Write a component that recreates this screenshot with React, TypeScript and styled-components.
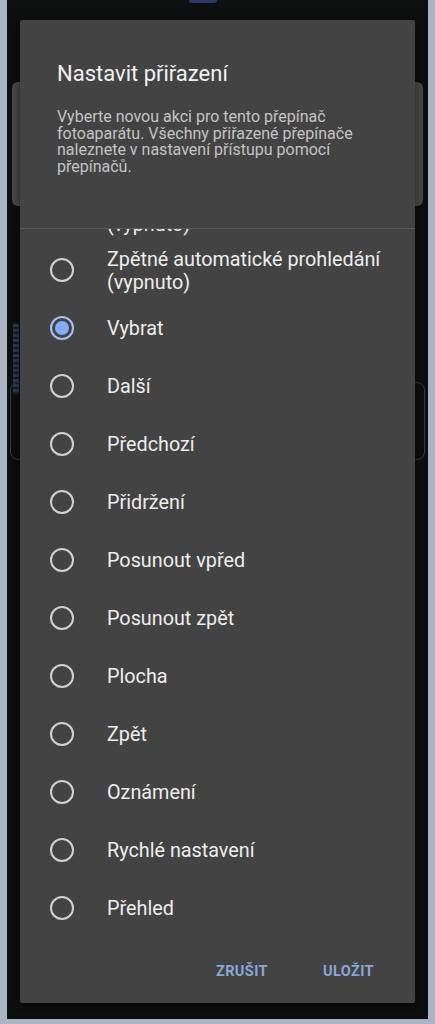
import { useLayoutEffect, useRef } from "react";
import styled, { createGlobalStyle } from "styled-components";

const GlobalStyle = createGlobalStyle`
  html, body {
    margin: 0;
    padding: 0;
    background: #0f1010;
  }
  * {
    box-sizing: border-box;
  }
`;

const Screen = styled.div`
  position: relative;
  width: 435px;
  height: 1024px;
  overflow: hidden;
  background: #0e0f0f;
  border-left: 7px solid #a9b4c4;
  border-right: 7px solid #a9b4c4;
  border-bottom: 5px solid #a9b4c4;
  font-family: Roboto, "Noto Sans", sans-serif;
  display: flex;
  flex-direction: column;
  align-items: center;
`;

const Notch = styled.div`
  width: 28px;
  height: 3px;
  border-radius: 0 0 3px 3px;
  background: #2c3a66;
  margin-left: -30px;
`;

const BgCard = styled.div`
  align-self: stretch;
  margin: 79px 5px 0;
  height: 124px;
  border-radius: 6px;
  background: #4d4e49;
`;

const BgDots = styled.div`
  align-self: flex-start;
  margin: 118px 0 0 6px;
  width: 6px;
  height: 70px;
  background: repeating-linear-gradient(#27425e 0 3px, #14202c 3px 5px);
`;

const BgOutline = styled.div`
  align-self: stretch;
  margin: -12px 3px 0;
  height: 78px;
  border: 1px solid #3b3d3d;
  border-radius: 8px;
`;

const Dialog = styled.div`
  position: absolute;
  top: 20px;
  left: 13px;
  width: 395px;
  height: 983px;
  background: #434343;
  border-radius: 2px;
  box-shadow: 0 4px 14px rgba(0, 0, 0, 0.6);
  display: flex;
  flex-direction: column;
`;

const Header = styled.div`
  height: 209px;
  padding: 39px 37px 0;
  border-bottom: 1px solid #5a5a5a;
`;

const Title = styled.h2`
  margin: 0;
  font-size: 22px;
  line-height: 30px;
  font-weight: 400;
  color: #f1f1f1;
`;

const Description = styled.p`
  margin: 20px 0 0;
  max-width: 300px;
  font-size: 16px;
  line-height: 16.7px;
  color: #c4c4c4;
`;

const List = styled.div`
  height: 710px;
  overflow-y: scroll;
  padding-bottom: 8px;

  &::-webkit-scrollbar {
    width: 5px;
  }
  &::-webkit-scrollbar-track {
    background: transparent;
  }
  &::-webkit-scrollbar-thumb {
    background: #8a8a8a;
    border-right: 1px solid #434343;
  }
`;

const Row = styled.label`
  display: flex;
  align-items: center;
  gap: 33px;
  height: 58px;
  padding: 1px 24px 0 30px;
  cursor: pointer;
`;

const Radio = styled.span<{ $checked: boolean }>`
  flex: none;
  position: relative;
  width: 24px;
  height: 24px;
  margin-top: -1px;
  border-radius: 50%;
  border: 2px solid ${(p) => (p.$checked ? "#a9c2f2" : "#d2d2d2")};

  &::after {
    content: "";
    display: ${(p) => (p.$checked ? "block" : "none")};
    position: absolute;
    inset: 3px;
    border-radius: 50%;
    background: #86adf9;
  }
`;

const RowText = styled.span`
  font-size: 19.8px;
  line-height: 23px;
  color: #ededed;
`;

const Actions = styled.div`
  flex: 1;
  display: flex;
  justify-content: flex-end;
  align-items: center;
  gap: 39px;
  padding: 0 33px 0 0;
`;

const ActionButton = styled.button`
  background: none;
  border: none;
  padding: 4px 8px;
  font-family: Roboto, "Noto Sans", sans-serif;
  font-size: 14.5px;
  font-weight: 700;
  letter-spacing: 0.4px;
  color: #8aa7d8;
  cursor: pointer;
`;

const options = [
  "Žádná akce",
  "Spustit kameru",
  "Automatické prohledání (vypnuto)",
  "Zpětné automatické prohledání (vypnuto)",
  "Vybrat",
  "Další",
  "Předchozí",
  "Přidržení",
  "Posunout vpřed",
  "Posunout zpět",
  "Plocha",
  "Zpět",
  "Oznámení",
  "Rychlé nastavení",
  "Přehled",
];

const App = () => {
  const listRef = useRef<HTMLDivElement>(null);

  useLayoutEffect(() => {
    if (listRef.current) listRef.current.scrollTop = 162;
  }, []);

  return (
    <Screen>
      <GlobalStyle />
      <Notch />
      <BgCard />
      <BgDots />
      <BgOutline />
      <Dialog>
        <Header>
          <Title>Nastavit přiřazení</Title>
          <Description>
            Vyberte novou akci pro tento přepínač fotoaparátu. Všechny
            přiřazené přepínače naleznete v nastavení přístupu pomocí
            přepínačů.
          </Description>
        </Header>
        <List ref={listRef}>
          {options.map((o) => (
            <Row key={o}>
              <Radio $checked={o === "Vybrat"} />
              <RowText>{o}</RowText>
            </Row>
          ))}
        </List>
        <Actions>
          <ActionButton>ZRUŠIT</ActionButton>
          <ActionButton>ULOŽIT</ActionButton>
        </Actions>
      </Dialog>
    </Screen>
  );
};

export default App;
